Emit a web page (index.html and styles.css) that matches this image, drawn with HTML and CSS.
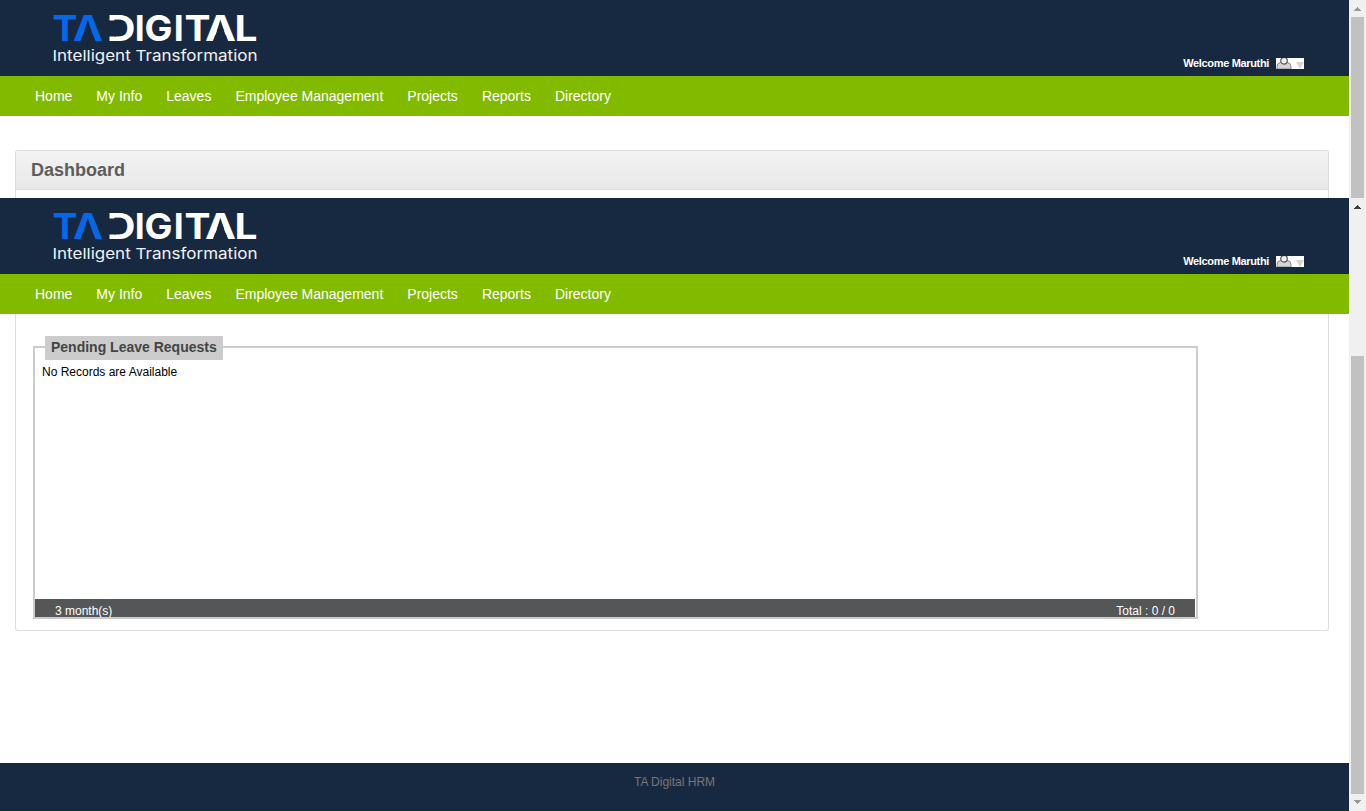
FILE: index.html
```html
<!DOCTYPE html>
<html lang="en">
<head>
<meta charset="utf-8">
<title>TA Digital HRM</title>
<link rel="stylesheet" href="styles.css">
</head>
<body>
<svg class="defs" width="0" height="0">
  <defs>
    <g id="logo">
      <g class="logo-word">
        <g class="logo-blue">
          <text x="52.500" y="41.300" textLength="25" lengthAdjust="spacingAndGlyphs">T</text>
          <text x="73" y="41.300" textLength="30" lengthAdjust="spacingAndGlyphs">A</text>
        </g>
        <text x="105" y="41.300" textLength="30.500" lengthAdjust="spacingAndGlyphs">D</text>
        <text x="134.800" y="41.300">I</text>
        <text x="144.500" y="41.300" textLength="28" lengthAdjust="spacingAndGlyphs">G</text>
        <text x="173.800" y="41.300">I</text>
        <text x="184.500" y="41.300" textLength="26" lengthAdjust="spacingAndGlyphs">T</text>
        <text x="205" y="41.300" textLength="31" lengthAdjust="spacingAndGlyphs">A</text>
        <text x="234.500" y="41.300" textLength="23" lengthAdjust="spacingAndGlyphs">L</text>
      </g>
      <!-- cut-outs for the open A and D -->
      <g class="logo-cut">
        <path d="M88 21.500 L95.500 42 H80.500 Z"/>
        <path d="M220.500 21.500 L228.200 42 H212.800 Z"/>
        <rect x="105" y="20.500" width="11" height="16"/>
        <rect x="105" y="14" width="4.500" height="29"/>
      </g>
      <text class="logo-tag" x="52.500" y="60.500" textLength="205" lengthAdjust="spacingAndGlyphs">Intelligent Transformation</text>
    </g>
    <g id="user">
      <rect width="28" height="11" fill="#fff"/>
      <path d="M1 11V8.500Q1 5 4.500 4.500H11.500Q15 5 15 8.500V11Z" fill="#d5d5d5" stroke="#888"/>
      <circle cx="8" cy="2.800" r="3.300" fill="#eee" stroke="#555" stroke-width="1.200"/>
      <path d="M20 4H28L24 11Z" fill="#d5d5d5"/>
    </g>
  </defs>
</svg>

<section class="view view-top">
  <div class="page">
    <header class="header">
      <svg class="logo" width="270" height="76"><use href="#logo"/></svg>
      <div class="welcome"><span>Welcome Maruthi</span><svg width="28" height="11"><use href="#user"/></svg></div>
    </header>
    <nav class="nav"><a>Home</a><a>My Info</a><a>Leaves</a><a>Employee Management</a><a>Projects</a><a>Reports</a><a>Directory</a></nav>
    <div class="box box-top"><h1>Dashboard</h1></div>
  </div>
  <div class="scrollbar">
    <svg class="arrow light" width="17" height="17"><path d="M8 7h1v1h1v1h1v1h1v1H5v-1h1V9h1V8h1z"/></svg>
    <div class="thumb"></div>
  </div>
</section>

<section class="view view-bottom">
  <div class="page">
    <header class="header">
      <svg class="logo" width="270" height="76"><use href="#logo"/></svg>
      <div class="welcome"><span>Welcome Maruthi</span><svg width="28" height="11"><use href="#user"/></svg></div>
    </header>
    <nav class="nav"><a>Home</a><a>My Info</a><a>Leaves</a><a>Employee Management</a><a>Projects</a><a>Reports</a><a>Directory</a></nav>
    <div class="box box-bottom">
      <fieldset class="panel">
        <legend>Pending Leave Requests</legend>
        <p class="empty">No Records are Available</p>
        <div class="totals"><span>3 month(s)</span><span>Total : 0 / 0</span></div>
      </fieldset>
    </div>
    <footer class="footer">TA Digital HRM</footer>
  </div>
  <div class="scrollbar">
    <svg class="arrow" width="17" height="17"><path d="M8 7h1v1h1v1h1v1h1v1H5v-1h1V9h1V8h1z"/></svg>
    <div class="thumb thumb-low"></div>
    <svg class="arrow light" width="17" height="17"><path d="M5 6h7v1h-1v1h-1v1H9v1H8V9H7V8H6V7H5z"/></svg>
  </div>
</section>
</body>
</html>
```
FILE: styles.css
```css
* { box-sizing: border-box; }
body { margin: 0; background: #fff; font: 12px "Liberation Sans", Arial, sans-serif; color: #000; overflow: hidden; }
.defs { display: block; height: 0; }
.view { display: flex; overflow: hidden; }
.view-top { height: 198px; }
.view-bottom { height: 613px; }
.page { width: 1349px; display: flex; flex-direction: column; }
.header { height: 76px; flex: none; background: #172941; display: flex; justify-content: space-between; }
.logo { display: block; }
.logo-word { font: 700 35.500px Inter, sans-serif; fill: #fff; }
.logo-blue { fill: #0368e9; }
.logo-cut { fill: #172941; }
.logo-tag { font: 400 15px Inter, sans-serif; fill: #f0f2f4; }
.welcome { display: flex; align-items: flex-end; gap: 7px; height: 12px; margin: 57px 45px 0 0; color: #fff; font-size: 11px; line-height: 12px; font-weight: bold; letter-spacing: -0.340px; white-space: nowrap; }
.nav { height: 40px; flex: none; background: #82ba00; display: flex; gap: 24px; padding-left: 35px; color: #fff; font-size: 14px; line-height: 40px; }
.box { width: 1314px; margin-left: 15px; border: 1px solid #dedede; flex: none; }
.box-top { height: 60px; margin-top: 34px; border-bottom: 0; border-radius: 3px 3px 0 0; }
.box-top h1 { margin: 0; height: 39px; padding-left: 15px; border-bottom: 1px solid #dedede; border-radius: 2px 2px 0 0; background: linear-gradient(#f3f3f3, #e8e8e8); color: #5d5d5d; font-size: 18px; line-height: 38px; }
.box-bottom { height: 317px; border-top: 0; border-radius: 0 0 3px 3px; padding: 22px 0 0 17px; }
.panel { margin: 0; width: 1165px; height: 283px; border: 2px solid #ccc; padding: 0; min-width: 0; }
.panel legend { margin-left: 10px; height: 22px; padding: 0 6px; background: #ccc; box-shadow: 0 2px #ccc; color: #444; font-size: 14px; font-weight: bold; line-height: 23px; }
.empty { margin: 0; padding: 7px 7px 0; line-height: 14px; }
.totals { display: flex; justify-content: space-between; height: 18px; margin-top: 220px; padding: 0 20px; background: #555657; color: #fff; line-height: 24px; overflow: hidden; width: 1160px; }
.footer { margin-top: 132px; height: 48px; flex: none; background: #172941; color: #777; text-align: center; line-height: 38px; }
.scrollbar { width: 17px; background: #f0f0f0; display: flex; flex-direction: column; }
.arrow { display: block; fill: #404040; flex: none; }
.arrow.light { fill: #999; }
.thumb { width: 13px; height: 181px; margin-left: 2px; background: #c1c1c1; }
.thumb-low { height: 438px; margin-top: 141px; }
```
